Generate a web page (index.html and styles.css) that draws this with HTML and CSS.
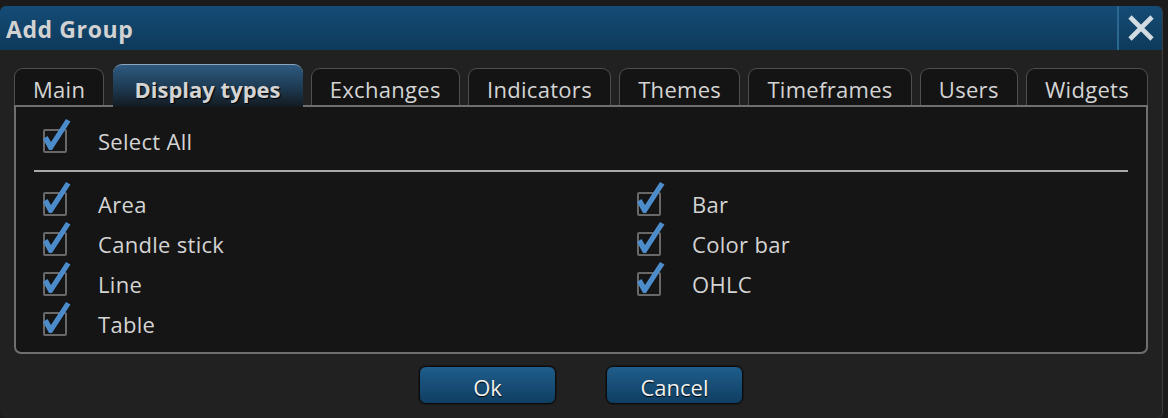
FILE: index.html
```html
<!DOCTYPE html>
<html>
<head>
<meta charset="utf-8">
<link rel="stylesheet" href="styles.css">
</head>
<body>
<div class="dialog">
  <div class="titlebar">
    <div class="title">Add Group</div>
    <div class="close">
      <svg width="28" height="26" viewBox="0 0 28 26"><path d="M3 2 L25 24 M25 2 L3 24" stroke="#d3dbe3" stroke-width="4.6" stroke-linecap="butt" fill="none"/></svg>
    </div>
  </div>
  <div class="tabs">
    <div class="tab">Main</div>
    <div class="tab active">Display types</div>
    <div class="tab">Exchanges</div>
    <div class="tab">Indicators</div>
    <div class="tab">Themes</div>
    <div class="tab">Timeframes</div>
    <div class="tab">Users</div>
    <div class="tab">Widgets</div>
  </div>
  <div class="panel">
    <div class="row selectall"><span class="cb"><svg class="check" viewBox="0 0 40 40"><path d="M8 22 L12.5 19 L16 25 L31 2 L35.5 4.5 L17 33 L14 33 Z" fill="#4d8ccb"/></svg></span><span class="lbl">Select All</span></div>
    <div class="sep"></div>
    <div class="grid">
      <div class="row"><span class="cb"><svg class="check" viewBox="0 0 40 40"><path d="M8 22 L12.5 19 L16 25 L31 2 L35.5 4.5 L17 33 L14 33 Z" fill="#4d8ccb"/></svg></span><span class="lbl">Area</span></div>
      <div class="row"><span class="cb"><svg class="check" viewBox="0 0 40 40"><path d="M8 22 L12.5 19 L16 25 L31 2 L35.5 4.5 L17 33 L14 33 Z" fill="#4d8ccb"/></svg></span><span class="lbl">Bar</span></div>
      <div class="row"><span class="cb"><svg class="check" viewBox="0 0 40 40"><path d="M8 22 L12.5 19 L16 25 L31 2 L35.5 4.5 L17 33 L14 33 Z" fill="#4d8ccb"/></svg></span><span class="lbl">Candle stick</span></div>
      <div class="row"><span class="cb"><svg class="check" viewBox="0 0 40 40"><path d="M8 22 L12.5 19 L16 25 L31 2 L35.5 4.5 L17 33 L14 33 Z" fill="#4d8ccb"/></svg></span><span class="lbl">Color bar</span></div>
      <div class="row"><span class="cb"><svg class="check" viewBox="0 0 40 40"><path d="M8 22 L12.5 19 L16 25 L31 2 L35.5 4.5 L17 33 L14 33 Z" fill="#4d8ccb"/></svg></span><span class="lbl">Line</span></div>
      <div class="row"><span class="cb"><svg class="check" viewBox="0 0 40 40"><path d="M8 22 L12.5 19 L16 25 L31 2 L35.5 4.5 L17 33 L14 33 Z" fill="#4d8ccb"/></svg></span><span class="lbl">OHLC</span></div>
      <div class="row"><span class="cb"><svg class="check" viewBox="0 0 40 40"><path d="M8 22 L12.5 19 L16 25 L31 2 L35.5 4.5 L17 33 L14 33 Z" fill="#4d8ccb"/></svg></span><span class="lbl">Table</span></div>
    </div>
  </div>
  <div class="buttons">
    <button class="btn">Ok</button>
    <button class="btn">Cancel</button>
  </div>
</div>
</body>
</html>
```
FILE: styles.css
```css
html, body {
  margin: 0;
  padding: 0;
  background: #1b1b1b;
  width: 1168px;
  height: 418px;
  overflow: hidden;
  font-family: "Open Sans", "Noto Sans", sans-serif;
}
.dialog {
  margin-top: 6px;
  width: 1163px;
  height: 412px;
  box-sizing: border-box;
  background: #212121;
  border-radius: 6px;
  border-right: 1px solid #3c3c3c;
  display: flex;
  flex-direction: column;
  overflow: hidden;
}
.titlebar {
  height: 44px;
  flex: none;
  display: flex;
  align-items: stretch;
  background: linear-gradient(#144c77, #0e3a5b);
}
.title {
  flex: 1;
  display: flex;
  align-items: center;
  padding: 2px 0 0 6px;
  font-size: 23px;
  font-weight: 700;
  color: #d2d2d2;
  letter-spacing: 0.6px;
}
.close {
  width: 43px;
  border-left: 2px solid #2b6891;
  display: flex;
  align-items: center;
  justify-content: center;
}
.tabs {
  display: flex;
  align-items: flex-end;
  justify-content: space-between;
  margin: 13px 14px 0 14px;
  height: 44px;
  flex: none;
  position: relative;
  z-index: 1;
}
.tab {
  height: 37px;
  box-sizing: border-box;
  padding: 3px 18px 0 18px;
  display: flex;
  align-items: center;
  flex: none;
  white-space: nowrap;
  background: #141414;
  border: 1px solid #4f4f4f;
  border-bottom: none;
  border-radius: 9px 9px 0 0;
  color: #d4d4d4;
  font-size: 22px;
  letter-spacing: 0.3px;
  margin-bottom: 2px;
}
.tab.active {
  height: 43px;
  margin-bottom: 0;
  padding: 5px 22px 0 22px;
  font-weight: 700;
  border-color: #8aa6be;
  border-width: 1px 0 0 0;
  background: linear-gradient(#2e5a80, #1d3a52 55%, #141a1f 100%);
  text-shadow: 1px 1px 1px #000;
  letter-spacing: 0;
}
.panel {
  margin: -2px 14px 0 14px;
  height: 249px;
  box-sizing: border-box;
  background: #151515;
  border: 2px solid #6f6f6f;
  border-radius: 0 0 7px 7px;
  flex: none;
  padding: 14px 18px 0 18px;
}
.row {
  height: 40px;
  display: flex;
  align-items: center;
  padding-left: 9px;
  color: #d4d4d4;
  font-size: 22px;
  letter-spacing: 0.3px;
}
.cb {
  position: relative;
  width: 24px;
  height: 24px;
  box-sizing: border-box;
  border: 2px solid #686868;
  border-radius: 2px;
  flex: none;
  margin-right: 31px;
}
.check {
  position: absolute;
  left: -10px;
  top: -14px;
  width: 40px;
  height: 40px;
}
.sep {
  height: 2px;
  background: #a9a9a9;
  margin: 9px 0 12px 0;
}
.grid {
  display: grid;
  grid-template-columns: 594px 1fr;
}
.buttons {
  display: flex;
  justify-content: center;
  gap: 50px;
  padding-top: 12px;
}
.btn {
  width: 137px;
  height: 38px;
  border-radius: 7px;
  border: 1px solid #0b0b0b;
  box-shadow: 0 0 0 1px #181818;
  background: linear-gradient(#1f5d8b, #0f3e62);
  color: #f2f2f2;
  font-family: "Open Sans", "Noto Sans", sans-serif;
  font-size: 22px;
  padding: 3px 0 0 0;
  text-shadow: 0 1px 1px #000;
}
```
